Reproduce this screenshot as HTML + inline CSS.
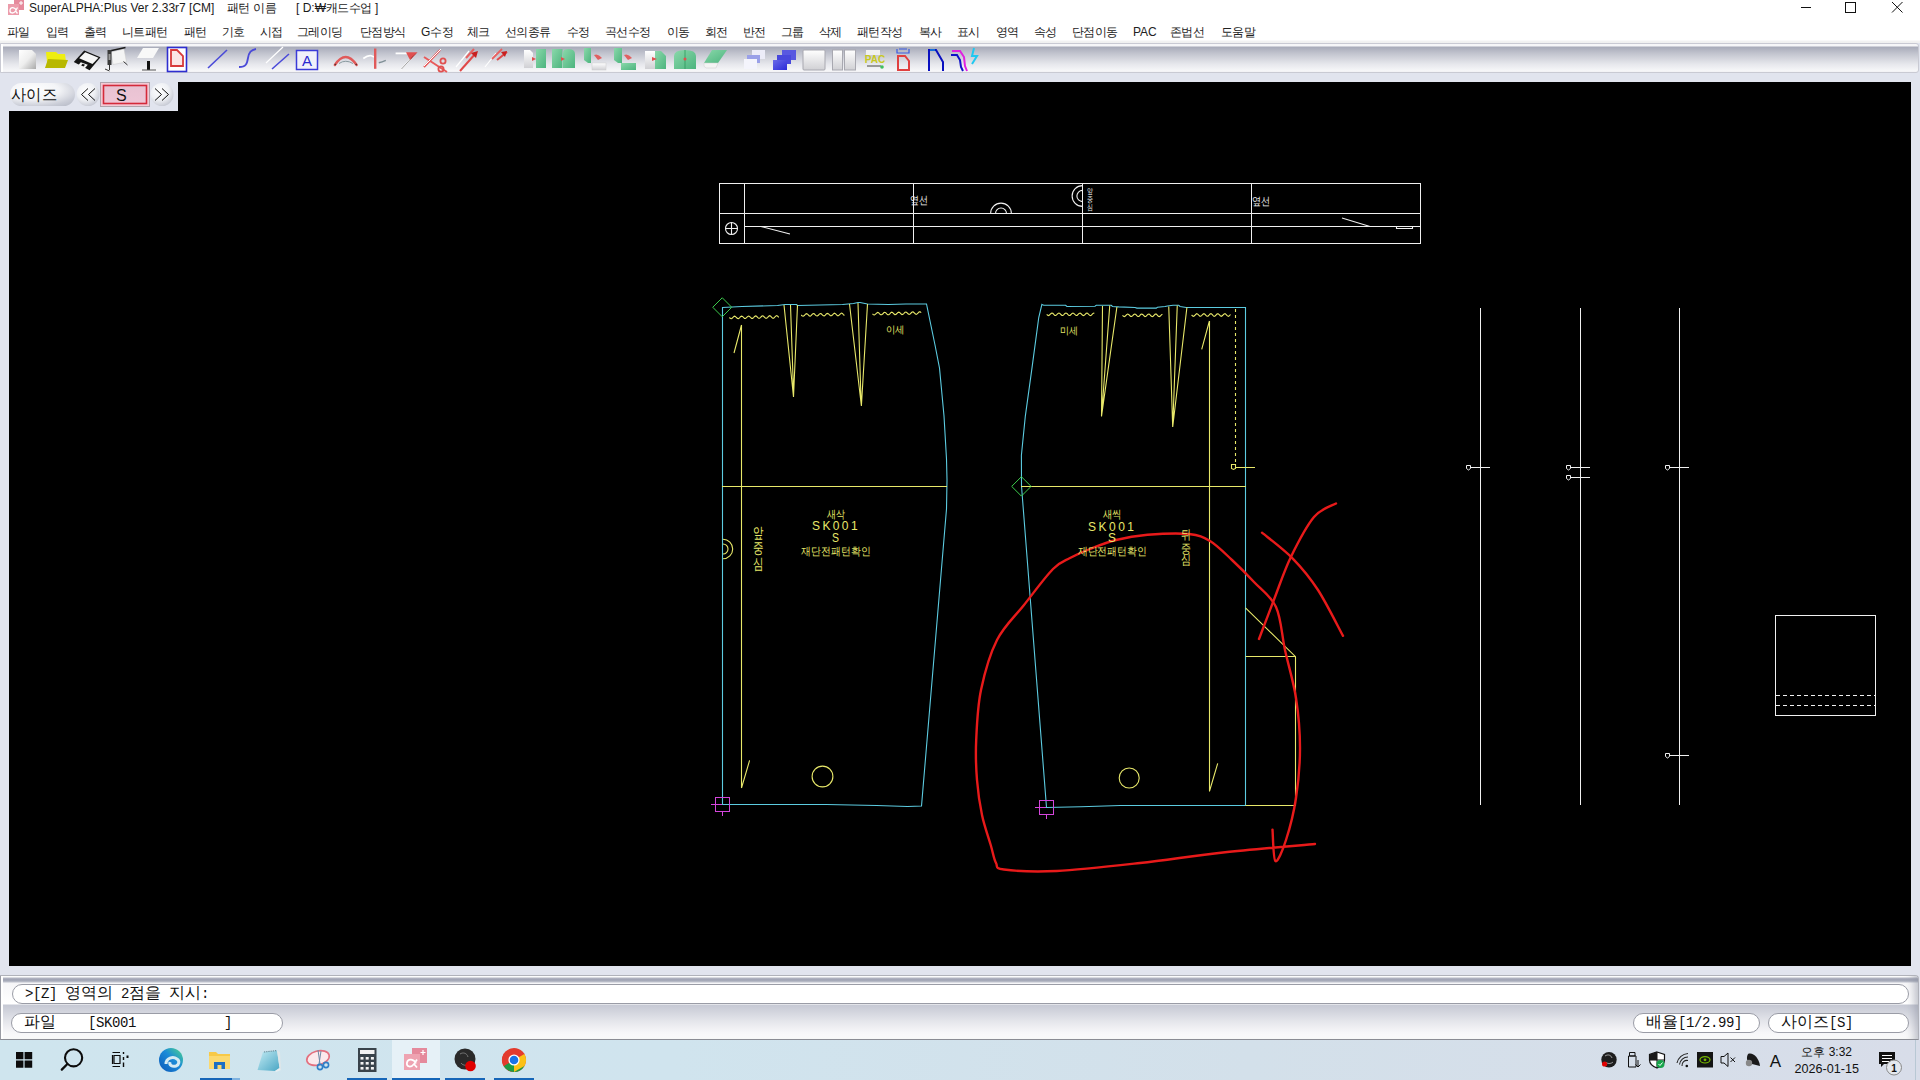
<!DOCTYPE html>
<html><head><meta charset="utf-8">
<style>
*{margin:0;padding:0;box-sizing:border-box}
html,body{width:1920px;height:1080px;overflow:hidden;background:#e1e4ee;font-family:"Liberation Sans",sans-serif;position:relative}
.abs{position:absolute}
#title{left:0;top:0;width:1920px;height:22px;background:#fff}
#title .t{top:1px;font-size:12px;color:#1a1a1a;white-space:pre;line-height:15px}
#menu{left:0;top:22px;width:1920px;height:21px;background:linear-gradient(#fff 0,#fff 18px,#f3f3f3 19px,#f0f0f0 21px)}
#menu .kc,#title .kc{display:inline-block;width:11.4px;font-weight:normal;text-align:center}
#menu span{position:absolute;top:2px;font-size:12px;line-height:16px;color:#222;white-space:nowrap}
#tb{left:0;top:43px;width:1919px;height:30px;border:1px solid #c9cad3;border-radius:0 3px 3px 0;box-shadow:inset 2px 0 0 #fff;
 background:linear-gradient(#f6f6f8 0px,#f6f6f8 2px,#a8abb9 3px,#c4c6d0 10px,#e6e7ec 20px,#f7f7f9 27px,#e8e8ee 29px)}
#canvas{left:9px;top:82px;width:1902px;height:884px;background:#000}
#sizep{left:8px;top:82px;width:170px;height:29px;background:#e1e4ee}
#bp{left:0;top:975px;width:1919px;height:65px;border:1px solid #b0b2ba;border-bottom-color:#8a8c94;border-left-color:#9a9ca4;border-radius:0 4px 0 0;
 box-shadow:inset 2px 0 0 #fff,inset -10px 0 8px -6px rgba(140,145,160,0.55);
 background:linear-gradient(#ffffff 0px,#ffffff 1px,#b4b7c4 2px,#9da1b1 4px,#bfc2cd 6px,#f6f6f8 7px,#f6f6f8 8px,#ffffff 28px,#c6c9d4 29px,#d3d5de 36px,#e6e7ec 46px,#f6f6f8 56px,#fbfbfb 62px)}
.pill i{display:inline-block;font-style:normal;text-align:center;overflow:visible;font-size:14px;vertical-align:top}
.pill i.kk{font-size:15.5px}
.pill{position:absolute;background:#fff;border:1px solid #9a9ca6;border-radius:11px;font-family:"Liberation Mono",monospace;color:#111;white-space:pre}
#task{left:0;top:1040px;width:1920px;height:40px;background:linear-gradient(90deg,#cfe5ee 0%,#d0e4ee 35%,#d3e0ea 65%,#d8dde9 100%)}
</style></head><body>
<div id="title" class="abs">
 <svg class="abs" style="left:8px;top:0" width="17" height="16" viewBox="0 0 17 16"><rect x="6" y="0" width="10" height="10" fill="#e58a9c"/><rect x="0" y="4" width="11" height="11" fill="#ec9cab"/><path d="M8.5,10.5 C7,7 2.5,6.5 2,10 C1.5,13.5 5.5,14 7.5,11 L9.5,7.5 M7.5,11 L9.5,13.5" fill="none" stroke="#fff" stroke-width="1.3"/><path d="M13,1 v4 M11,3 h4" stroke="#fff" stroke-width="1"/></svg>
 <svg class="abs" style="left:1790px;top:0" width="130" height="18" viewBox="1790 0 130 18"><path d="M1801,7.5 H1811" stroke="#111" stroke-width="1"/><rect x="1845.5" y="2.5" width="10" height="10" fill="none" stroke="#111" stroke-width="1"/><path d="M1892,2 L1902.5,12.5 M1902.5,2 L1892,12.5" stroke="#111" stroke-width="1"/></svg>
 <div class="t abs" style="left:29px">SuperALPHA:Plus Ver 2.33r7 [CM]</div><div class="t abs" style="left:227px"><b class="kc">패</b><b class="kc">턴</b> <b class="kc">이</b><b class="kc">름</b></div><div class="t abs" style="left:296px">[ D:₩<b class="kc">캐</b><b class="kc">드</b><b class="kc">수</b><b class="kc">업</b> ]</div>
</div>
<div id="menu" class="abs">
 <span style="left:7px"><b class="kc">파</b><b class="kc">일</b></span><span style="left:46px"><b class="kc">입</b><b class="kc">력</b></span><span style="left:84px"><b class="kc">출</b><b class="kc">력</b></span>
 <span style="left:122px"><b class="kc">니</b><b class="kc">트</b><b class="kc">패</b><b class="kc">턴</b></span><span style="left:184px"><b class="kc">패</b><b class="kc">턴</b></span><span style="left:222px"><b class="kc">기</b><b class="kc">호</b></span>
 <span style="left:260px"><b class="kc">시</b><b class="kc">접</b></span><span style="left:297px"><b class="kc">그</b><b class="kc">레</b><b class="kc">이</b><b class="kc">딩</b></span><span style="left:360px"><b class="kc">단</b><b class="kc">점</b><b class="kc">방</b><b class="kc">식</b></span>
 <span style="left:421px">G<b class="kc">수</b><b class="kc">정</b></span><span style="left:467px"><b class="kc">체</b><b class="kc">크</b></span><span style="left:505px"><b class="kc">선</b><b class="kc">의</b><b class="kc">종</b><b class="kc">류</b></span>
 <span style="left:567px"><b class="kc">수</b><b class="kc">정</b></span><span style="left:605px"><b class="kc">곡</b><b class="kc">선</b><b class="kc">수</b><b class="kc">정</b></span><span style="left:667px"><b class="kc">이</b><b class="kc">동</b></span>
 <span style="left:705px"><b class="kc">회</b><b class="kc">전</b></span><span style="left:743px"><b class="kc">반</b><b class="kc">전</b></span><span style="left:781px"><b class="kc">그</b><b class="kc">룹</b></span>
 <span style="left:819px"><b class="kc">삭</b><b class="kc">제</b></span><span style="left:857px"><b class="kc">패</b><b class="kc">턴</b><b class="kc">작</b><b class="kc">성</b></span><span style="left:919px"><b class="kc">복</b><b class="kc">사</b></span>
 <span style="left:957px"><b class="kc">표</b><b class="kc">시</b></span><span style="left:996px"><b class="kc">영</b><b class="kc">역</b></span><span style="left:1034px"><b class="kc">속</b><b class="kc">성</b></span>
 <span style="left:1072px"><b class="kc">단</b><b class="kc">점</b><b class="kc">이</b><b class="kc">동</b></span><span style="left:1133px">PAC</span><span style="left:1170px"><b class="kc">존</b><b class="kc">법</b><b class="kc">선</b></span>
 <span style="left:1221px"><b class="kc">도</b><b class="kc">움</b><b class="kc">말</b></span>
</div>
<div id="tb" class="abs"></div>
<svg class="abs" style="left:0;top:40px" width="1000" height="36" viewBox="0 40 1000 36">
<defs>
<linearGradient id="pg" x1="0" y1="0" x2="1" y2="1"><stop offset="0" stop-color="#ffffff"/><stop offset="0.5" stop-color="#eeeeee"/><stop offset="1" stop-color="#a9a9a9"/></linearGradient>
<linearGradient id="gg" x1="0" y1="0" x2="1" y2="1"><stop offset="0" stop-color="#8ad8aa"/><stop offset="1" stop-color="#4cb47e"/></linearGradient>
<linearGradient id="wg" x1="0" y1="0" x2="0" y2="1"><stop offset="0" stop-color="#ffffff"/><stop offset="1" stop-color="#d0d0d4"/></linearGradient>
<linearGradient id="bg" x1="0" y1="0" x2="1" y2="1"><stop offset="0" stop-color="#6a6ae8"/><stop offset="1" stop-color="#2a2ad8"/></linearGradient>
<linearGradient id="rg" x1="0" y1="0" x2="1" y2="0"><stop offset="0" stop-color="#f08080"/><stop offset="1" stop-color="#d83030"/></linearGradient>
</defs>
<!-- 1 new page -->
<path d="M19,50 H32 L36,54 V69 H19 Z" fill="url(#pg)"/>
<!-- 2 folder -->
<path d="M46,52 H56 L58,54 H65 L66,62 H47 Z" fill="#eeee10"/>
<path d="M48,59 L68,60 L65,68 H45 Z" fill="#b8b800"/>
<!-- 3 floppy -->
<path d="M84.2,50.5 L100.5,57.2 L89.6,70.2 L73.8,62 Z" fill="#141414"/>
<path d="M85.2,52.2 L98.5,57.8 L92.5,63.9 L79.2,58.2 Z" fill="#f6f6f6"/>
<path d="M80.8,62.2 L87.8,64.8 L84.6,68.4 L77.8,65.8 Z" fill="#f0f0f0"/>
<path d="M82.5,63.8 L85,64.8 L83.6,66.5 L81.2,65.5 Z" fill="#141414"/>
<!-- 4 plotter -->
<path d="M111,52 L124,49 L126.5,62 L113,64.5 Z" fill="#f4f4f4" stroke="#c8c8c8" stroke-width="0.5"/>
<path d="M110.5,50.8 L125.5,47.5" stroke="#1a1a1a" stroke-width="1.4"/>
<path d="M107.5,50 H111.5 V65 H107.5 Z" fill="#3a3a3a"/>
<path d="M108.5,54 H110.5 V60 H108.5 Z" fill="#9a9a9a"/>
<path d="M109.5,65 V70 M105,69 L109.5,71 M123.5,61.5 L127.5,65" stroke="#333" stroke-width="1"/>
<!-- 5 digitizer -->
<path d="M143,48 H159 L153,58 H137 Z" fill="#f8f8f8"/>
<path d="M147,61 H150 V70 H147 Z" fill="#111"/>
<path d="M142,70 H156" stroke="#555" stroke-width="1"/>
<!-- 6 red doc blue border -->
<rect x="167.5" y="47.5" width="19" height="24" fill="#fff" stroke="#2e2ed0" stroke-width="1.6"/>
<path d="M171,50 H177 L183,56 V66 H171 Z" fill="#fbe6e6" stroke="#d83a3a" stroke-width="1.8"/>
<!-- 7 line -->
<path d="M208,68 L227,50" stroke="#4a4ad8" stroke-width="1.6"/>
<!-- 8 S curve -->
<path d="M239,67 C246,67 247,64 248,58 C249,52 251,50 256,49" fill="none" stroke="#4a4ad8" stroke-width="1.8"/>
<!-- 9 parallel -->
<path d="M266,63 L283,47" stroke="#ffffff" stroke-width="1.2"/>
<path d="M272,69 L289,54" stroke="#4a4ad8" stroke-width="1.6"/>
<!-- 10 A box -->
<rect x="296.5" y="50.5" width="21" height="19" fill="#f0f0fa" stroke="#3a3ad8" stroke-width="1.5"/>
<text x="307" y="66" font-family="Liberation Sans, sans-serif" font-size="15" fill="#2a2ad0" text-anchor="middle">A</text>
<!-- 11 red arc -->
<path d="M339,63.5 Q345.5,59 353,63.5" fill="none" stroke="#8a9aa0" stroke-width="1"/>
<path d="M334.8,65 Q345.5,49 356.7,65" fill="none" stroke="#e05a5a" stroke-width="2.3" stroke-linecap="round"/>
<path d="M334.8,65 l1,-1 M356.7,65 l-1,-1" stroke="#5a3030" stroke-width="1.6"/>
<!-- 12 -->
<path d="M363.3,58.5 Q368,55 371.3,55.7 L374,57" fill="none" stroke="#ffffff" stroke-width="1.6"/>
<path d="M378.8,62.8 Q382,62 385.8,60.4" fill="none" stroke="#7f8f96" stroke-width="1.5"/>
<path d="M375.2,48.5 V68.8" stroke="#e05a5a" stroke-width="2.4"/>
<!-- 13 -->
<path d="M395.6,53.4 H407" stroke="#ffffff" stroke-width="1.8"/>
<path d="M401.2,69.3 L414,55" stroke="#ffffff" stroke-width="1.3"/>
<path d="M401.5,69 L412,57.5" stroke="#444" stroke-width="0.5"/>
<path d="M406,52.2 L417.5,52.2 L410,60 Z" fill="#e05050"/>
<path d="M417.5,52.2 L410,60 L412,57" fill="#802020"/>
<!-- 14 scissors -->
<path d="M424,57 L447,72 M424,67 L440,50" stroke="#e85a5a" stroke-width="2"/>
<path d="M424,66 L441,49" stroke="#fff" stroke-width="1"/>
<circle cx="443" cy="61" r="2.6" fill="none" stroke="#e05050" stroke-width="1.8"/>
<circle cx="441" cy="69" r="2.6" fill="none" stroke="#e05050" stroke-width="1.8"/>
<!-- 15 -->
<path d="M456,67 L469,51" stroke="#fff" stroke-width="1.2"/>
<path d="M460,71 L476,53" stroke="#e04848" stroke-width="2"/>
<path d="M466,58 L474,49" stroke="#e86060" stroke-width="2"/>
<path d="M471,53 L478,51 L476,58 Z" fill="#c82020"/>
<!-- 16 -->
<path d="M485,67 L496,53" stroke="#fff" stroke-width="1.2"/>
<path d="M492,59 L502,49" stroke="#e86060" stroke-width="1.8"/>
<path d="M497,60 L507,52" stroke="#e04848" stroke-width="2"/>
<path d="M501,52 L507,51 L505,57 Z" fill="#c82020"/>
<!-- 17 -->
<path d="M524,50 H530 L533,53 V68 H524 Z" fill="url(#wg)"/>
<rect x="536" y="49" width="10" height="19" fill="url(#gg)"/>
<path d="M532,57 L536,59 L532,61 Z" fill="#e05050"/>
<!-- 18 -->
<rect x="552" y="49" width="10.5" height="19" fill="url(#gg)"/>
<path d="M563,68 V53 Q563,49 568,49 Q575,49 575,54 V68 Z" fill="url(#gg)"/>
<path d="M561,57 L565,59 L561,61 Z" fill="#e05050"/>
<!-- 19 -->
<path d="M584,48 H591 V63 H588 L584,60 Z" fill="url(#gg)"/>
<rect x="592" y="63" width="14" height="7" fill="url(#wg)" stroke="#ccc" stroke-width="0.5"/>
<path d="M594,55 Q598,53 602,58 L598,60 Z" fill="#e06060"/>
<!-- 20 -->
<path d="M614,48 H622 V63 H618 L614,60 Z" fill="url(#gg)"/>
<rect x="621" y="63" width="15" height="7" fill="url(#gg)"/>
<path d="M624,55 Q628,53 632,58 L628,60 Z" fill="#e06060"/>
<!-- 21 -->
<path d="M645,51 L650,51 L655,51 V69 H645 Z" fill="url(#wg)"/>
<path d="M655,51 H661 L666,56 V69 H655 Z" fill="url(#gg)"/>
<path d="M652,57 L657,59 L652,61 Z" fill="#e05050"/>
<!-- 22 -->
<path d="M674,69 V56 Q674,50 685,50 Q696,50 696,56 V69 Z" fill="url(#gg)"/>
<path d="M685,50 V69" stroke="#2d9a5e" stroke-width="0.8"/>
<circle cx="685" cy="59" r="1.5" fill="#e05050"/>
<!-- 23 eraser -->
<path d="M712,50 H727 L718,63 H704 Z" fill="url(#gg)"/>
<path d="M704,63 H718 L716,68 H706 Q703,67 704,63 Z" fill="#f4f4f4" stroke="#ccc" stroke-width="0.5"/>
<!-- 24 -->
<rect x="752" y="50" width="13" height="9" fill="#ececf8"/>
<rect x="747" y="55" width="13" height="8" fill="#9aa0e8"/>
<rect x="744" y="59" width="13" height="10" fill="#f4f4fc"/>
<!-- 25 -->
<rect x="782" y="50" width="14" height="10" fill="#5858e0"/>
<rect x="777" y="55" width="14" height="9" fill="#4848dc"/>
<rect x="773" y="60" width="14" height="10" fill="url(#bg)"/>
<!-- 26 -->
<rect x="803" y="50" width="22" height="20" rx="1" fill="url(#wg)" stroke="#a8a8b0" stroke-width="1"/>
<!-- 27 -->
<rect x="832.5" y="50" width="10" height="20" fill="url(#wg)" stroke="#a8a8b0" stroke-width="1"/>
<rect x="844.5" y="50" width="11" height="20" fill="url(#wg)" stroke="#a8a8b0" stroke-width="1"/>
<!-- 28 PAC -->
<rect x="866" y="50" width="14" height="5" fill="#f0f0f0"/>
<text x="875" y="63" font-family="Liberation Sans, sans-serif" font-weight="bold" font-size="10" fill="#c8c820" text-anchor="middle">PAC</text>
<path d="M867,66 H881" stroke="#999" stroke-width="2"/>
<circle cx="882" cy="67" r="1.8" fill="#40c060"/>
<!-- 29 -->
<path d="M897,49 V53 H909 V49 M899,49 H907" fill="none" stroke="#3a5ae0" stroke-width="1.2"/>
<path d="M898,56 H905 L909,61 V70 H898 Z" fill="none" stroke="#e04040" stroke-width="2"/>
<!-- 30 -->
<path d="M929,71 V50 H936 L943,62 V71" fill="none" stroke="#0a10c0" stroke-width="2"/>
<path d="M930,50 H935" stroke="#20c8f0" stroke-width="1"/>
<!-- 31 -->
<path d="M952,51 H960 L964,57 L965,66 L967,71" fill="none" stroke="#e020e0" stroke-width="2"/>
<path d="M951,55 H957 L960,60 L961,67 L963,71" fill="none" stroke="#1010c8" stroke-width="2"/>
<path d="M974,48 L972,56 L977,56 L972,64" fill="none" stroke="#20c8f0" stroke-width="2"/>
</svg>

<div id="canvas" class="abs"></div>
<svg class="abs" style="left:0;top:0" width="1920" height="1080" viewBox="0 0 1920 1080">
<g fill="none" stroke="#f0f0f0" stroke-width="1" shape-rendering="crispEdges">
<rect x="719.5" y="183.5" width="701" height="60"/>
<path d="M744.5,183 V243 M913.5,183 V243 M1082.5,183 V243 M1251.5,183 V243 M719,213.5 H1420 M744,226.5 H1420"/>
</g>
<g fill="none" stroke="#f0f0f0" stroke-width="1.1">
<circle cx="731.5" cy="228.5" r="6"/><path d="M725.5,228.5 H737.5 M731.5,222.5 V234.5"/>
<path d="M761,226.5 L790,234 M1342,218 L1370,226.5 M1396.5,227 V228.5 H1412.5 V227"/>
<path d="M990.6,213.5 A10.4,10.4 0 0 1 1011.4,213.5 M995.5,213.5 A5.5,5.5 0 0 1 1006.5,213.5"/>
<path d="M1082.5,185.6 A10.4,10.4 0 0 0 1082.5,206.4 M1082.5,190.4 A5.6,5.6 0 0 0 1082.5,201.6"/>
</g>
<g fill="none" stroke="#5ccbe0" stroke-width="1.1">
<path d="M722.5,307.5 L742,306.5 L777.5,305.5 L785,304.5 L796.5,304.5 L797.5,305.5 L842.5,304.5 L853.5,303.5 L858,302.5 L860,302.5 L867.5,304 L888.5,304.5 L906,304 L926.5,304 L935,345 L939.5,368 L944,416 L946.5,459 L947,480 L946.5,509 L921.5,806 L907.5,806.5 L876.5,805.5 L826.5,804.5 L722.5,804.5 Z"/>
</g>
<g fill="none" stroke="#e8e86a" stroke-width="1.1">
<path d="M741.5,325 V788 M722,486.5 H947 M741.5,325 L734,353 M741.5,788 L749.6,760.4"/>
<path d="M784,305 L793.5,397 L797.5,305 M790.5,305 L793.5,392 M849.5,304 L861.4,406 L867.5,304 M858,303 L861,400"/>
<circle cx="822.5" cy="776.5" r="10.4"/>
<path d="M723,539.3 A9.7,9.7 0 0 1 723,558.7 M723,544 A5,5 0 0 1 723,554"/>
<path d="M729.4,317.5 L730.4,318.5 L731.4,318.7 L732.4,318.0 L733.4,316.9 L734.4,316.2 L735.4,316.4 L736.4,317.5 L737.5,318.5 L738.5,318.6 L739.5,317.9 L740.5,316.7 L741.5,316.1 L742.5,316.4 L743.5,317.4 L744.5,318.4 L745.5,318.5 L746.5,317.7 L747.5,316.6 L748.5,316.0 L749.5,316.4 L750.5,317.4 L751.6,318.4 L752.6,318.4 L753.6,317.6 L754.6,316.5 L755.6,315.9 L756.6,316.3 L757.6,317.4 L758.6,318.3 L759.6,318.3 L760.6,317.4 L761.6,316.3 L762.6,315.8 L763.6,316.3 L764.6,317.4 L765.7,318.2 L766.7,318.2 L767.7,317.3 L768.7,316.2 L769.7,315.7 L770.7,316.2 L771.7,317.3 L772.7,318.2 L773.7,318.1 L774.7,317.2 L775.7,316.1 L776.7,315.6 L777.7,316.2 L778.8,317.3"/>
<path d="M801.2,315.0 L802.3,316.0 L803.3,316.2 L804.3,315.5 L805.3,314.4 L806.3,313.7 L807.3,313.9 L808.3,314.9 L809.3,315.9 L810.3,316.1 L811.3,315.4 L812.3,314.2 L813.3,313.6 L814.3,313.8 L815.3,314.9 L816.3,315.8 L817.3,316.0 L818.3,315.3 L819.3,314.1 L820.3,313.5 L821.3,313.8 L822.3,314.8 L823.3,315.8 L824.3,315.9 L825.3,315.1 L826.3,314.0 L827.3,313.4 L828.3,313.7 L829.3,314.7 L830.4,315.7 L831.4,315.8 L832.4,315.0 L833.4,313.9 L834.4,313.2 L835.4,313.6 L836.4,314.7 L837.4,315.6 L838.4,315.7 L839.4,314.9 L840.4,313.8 L841.4,313.1 L842.4,313.5 L843.4,314.6 L844.4,315.5"/>
<path d="M872.5,313.8 L873.5,314.8 L874.5,315.0 L875.5,314.2 L876.6,313.1 L877.6,312.4 L878.6,312.7 L879.6,313.8 L880.6,314.7 L881.6,314.8 L882.7,314.0 L883.7,312.8 L884.7,312.3 L885.7,312.7 L886.7,313.8 L887.7,314.7 L888.8,314.7 L889.8,313.8 L890.8,312.6 L891.8,312.2 L892.8,312.7 L893.8,313.8 L894.8,314.6 L895.9,314.5 L896.9,313.5 L897.9,312.4 L898.9,312.1 L899.9,312.7 L900.9,313.8 L902.0,314.6 L903.0,314.3 L904.0,313.3 L905.0,312.2 L906.0,312.0 L907.0,312.7 L908.0,313.8 L909.1,314.5 L910.1,314.1 L911.1,313.0 L912.1,312.0 L913.1,311.9 L914.1,312.7 L915.2,313.8 L916.2,314.4 L917.2,313.9 L918.2,312.8 L919.2,311.9 L920.2,311.8 L921.2,312.7"/>
</g>
<path d="M722.25,297.75 L731.75,307.25 L722.25,316.75 L712.75,307.25 Z" fill="none" stroke="#3ccc4c" stroke-width="1"/>
<g fill="none" stroke="#d445dc" stroke-width="1" shape-rendering="crispEdges"><rect x="715.5" y="797.5" width="14" height="14"/><path d="M711,804.5 H722 M722.5,811 V816"/></g>
<g fill="none" stroke="#5ccbe0" stroke-width="1.1">
<path d="M1041.9,304.4 L1043.75,305.25 L1065.6,305.25 L1066.9,306.5 L1095,306.25 L1096.25,305.25 L1111.25,305.25 L1112.5,306.5 L1118.75,306.9 L1135,307.5 L1136.9,308.1 L1156.25,308.1 L1157.5,307.25 L1165,306.5 L1167.5,306 L1173,305.25 L1178.75,305.25 L1180,306.5 L1186.25,307.5 L1245.5,307.5 L1245.5,805.5 L1120.4,805.5 L1081,806.7 L1046.5,807.5 L1021.5,486 L1021.4,455.3 L1025.3,416.4 L1032,367.8 L1038.75,317.5 Z"/>
</g>
<g fill="none" stroke="#e8e86a" stroke-width="1.1">
<path d="M1209.5,321 V791 M1021,486.5 H1246 M1209.4,321 L1201.7,349.3 M1209.4,791.5 L1217.7,763.3"/>
<path d="M1102.5,306 L1101.5,416.4 L1116.9,307 M1109.75,305.5 L1102,410 M1168.75,306.5 L1172.7,427 L1186.9,307.5 M1177.25,305.5 L1173,420"/>
<path d="M1245.5,607.8 L1295.5,656.7 V805.5 H1245.5 M1245.5,656.5 H1295.5"/>
<circle cx="1129.2" cy="778" r="10"/>
<path d="M1235.5,309 V465" stroke-dasharray="3,3"/>
<path d="M1236,467.5 H1255 M1231.5,464.5 h4 v4 l-2,1 l-2,-1 z"/>
<path d="M1046.7,314.3 L1047.7,315.3 L1048.7,315.6 L1049.7,314.8 L1050.8,313.7 L1051.8,313.0 L1052.8,313.3 L1053.8,314.4 L1054.8,315.4 L1055.8,315.5 L1056.8,314.7 L1057.8,313.6 L1058.9,313.0 L1059.9,313.4 L1060.9,314.5 L1061.9,315.4 L1062.9,315.5 L1063.9,314.6 L1064.9,313.5 L1065.9,313.0 L1067.0,313.5 L1068.0,314.6 L1069.0,315.5 L1070.0,315.4 L1071.0,314.5 L1072.0,313.4 L1073.0,313.0 L1074.0,313.6 L1075.1,314.7 L1076.1,315.5 L1077.1,315.4 L1078.1,314.4 L1079.1,313.4 L1080.1,313.0 L1081.1,313.7 L1082.1,314.8 L1083.2,315.6 L1084.2,315.3 L1085.2,314.3 L1086.2,313.3 L1087.2,313.0 L1088.2,313.8 L1089.2,314.9 L1090.2,315.6 L1091.3,315.3 L1092.3,314.2 L1093.3,313.2 L1094.3,313.1"/>
<path d="M1122.5,315.3 L1123.5,316.3 L1124.5,316.6 L1125.6,315.8 L1126.6,314.6 L1127.6,314.0 L1128.6,314.4 L1129.7,315.5 L1130.7,316.4 L1131.7,316.5 L1132.7,315.6 L1133.8,314.5 L1134.8,314.0 L1135.8,314.5 L1136.8,315.7 L1137.8,316.5 L1138.9,316.4 L1139.9,315.4 L1140.9,314.3 L1141.9,314.0 L1143.0,314.7 L1144.0,315.8 L1145.0,316.6 L1146.0,316.3 L1147.1,315.2 L1148.1,314.2 L1149.1,314.1 L1150.1,314.9 L1151.1,316.0 L1152.2,316.6 L1153.2,316.2 L1154.2,315.1 L1155.2,314.1 L1156.3,314.1 L1157.3,315.1 L1158.3,316.2 L1159.3,316.6 L1160.4,316.0 L1161.4,314.9 L1162.4,314.1"/>
<path d="M1191.6,315.0 L1192.6,316.0 L1193.6,316.3 L1194.7,315.5 L1195.7,314.3 L1196.7,313.7 L1197.7,314.1 L1198.8,315.2 L1199.8,316.1 L1200.8,316.2 L1201.8,315.3 L1202.9,314.2 L1203.9,313.7 L1204.9,314.2 L1205.9,315.4 L1207.0,316.2 L1208.0,316.1 L1209.0,315.1 L1210.0,314.0 L1211.0,313.7 L1212.1,314.4 L1213.1,315.6 L1214.1,316.3 L1215.1,316.0 L1216.2,314.9 L1217.2,313.9 L1218.2,313.8 L1219.2,314.6 L1220.3,315.7 L1221.3,316.3 L1222.3,315.8 L1223.3,314.7 L1224.4,313.8 L1225.4,313.8 L1226.4,314.8 L1227.4,315.9 L1228.5,316.3 L1229.5,315.7 L1230.5,314.5"/>
</g>
<path d="M1021.4,476.7 L1031.1,486.4 L1021.4,496.1 L1011.7,486.4 Z" fill="none" stroke="#3ccc4c" stroke-width="1"/>
<g fill="none" stroke="#d445dc" stroke-width="1" shape-rendering="crispEdges"><rect x="1039.5" y="800.5" width="14" height="14"/><path d="M1035,807.5 H1046 M1046.5,814 V819"/></g>
<g fill="none" stroke="#f0f0f0" stroke-width="1" shape-rendering="crispEdges">
<path d="M1480.5,308 V805 M1580.5,308 V805 M1679.5,308 V805"/>
<path d="M1471,467.5 H1490 M1571,467.5 H1590 M1571,477.5 H1590 M1670,467.5 H1689 M1670,755.5 H1689"/>
<rect x="1775.5" y="615.5" width="100" height="100"/>
<path d="M1776,695.5 H1875 M1776,705.5 H1875" stroke-dasharray="4,3"/>
</g>
<g fill="none" stroke="#f0f0f0" stroke-width="1">
<path d="M1466.5,465.5 h4 v3 l-2,1.5 l-2,-1.5 z"/>
<path d="M1566.5,465.5 h4 v3 l-2,1.5 l-2,-1.5 z"/>
<path d="M1566.5,475.5 h4 v3 l-2,1.5 l-2,-1.5 z"/>
<path d="M1665.5,465.5 h4 v3 l-2,1.5 l-2,-1.5 z"/>
<path d="M1665.5,753.5 h4 v3 l-2,1.5 l-2,-1.5 z"/>
</g>
<g fill="none" stroke="#e81a1a" stroke-width="2.4" stroke-linecap="round" stroke-linejoin="round">
<path d="M1272.5,829.6 C1273.0,834.8 1273.2,859.3 1275.4,861.0 C1277.7,862.7 1282.6,850.5 1286.0,840.0 C1289.4,829.5 1293.7,813.3 1296.0,798.0 C1298.3,782.7 1300.0,764.7 1300.0,748.0 C1300.0,731.3 1298.5,714.3 1296.0,698.0 C1293.5,681.7 1288.3,665.2 1285.0,650.0 C1281.7,634.8 1281.2,618.3 1276.0,607.0 C1270.8,595.7 1261.3,589.8 1254.0,582.0 C1246.7,574.2 1239.3,566.8 1232.0,560.0 C1224.7,553.2 1217.2,545.3 1210.0,541.0 C1202.8,536.7 1199.4,535.0 1189.0,534.0 C1178.6,533.0 1159.7,533.8 1147.5,534.8 C1135.3,535.8 1125.6,537.6 1116.0,540.0 C1106.4,542.4 1097.7,546.0 1090.0,549.0 C1082.3,552.0 1076.2,554.7 1070.0,558.0 C1063.8,561.3 1060.7,561.2 1053.0,569.0 C1045.3,576.8 1033.3,593.2 1024.0,605.0 C1014.7,616.8 1004.2,625.8 997.0,640.0 C989.8,654.2 984.5,673.3 981.0,690.0 C977.5,706.7 976.9,725.0 976.2,740.0 C975.5,755.0 976.0,767.5 977.0,780.0 C978.0,792.5 979.7,804.0 982.0,815.0 C984.3,826.0 988.7,838.0 991.0,846.0 C993.3,854.0 993.8,859.1 996.0,863.0 C998.2,866.9 993.9,868.2 1004.0,869.5 C1014.1,870.8 1034.0,872.1 1056.7,871.0 C1079.4,869.9 1112.3,866.1 1140.0,863.0 C1167.7,859.9 1193.8,855.7 1223.0,852.5 C1252.2,849.3 1299.7,845.4 1315.0,844.0"/>
<path d="M1336.0,503.5 C1332.3,505.8 1321.5,508.1 1314.0,517.0 C1306.5,525.9 1297.6,543.2 1291.0,556.7 C1284.4,570.2 1279.9,584.3 1274.6,598.0 C1269.3,611.7 1261.6,632.2 1259.0,639.0"/>
<path d="M1262.0,532.7 C1267.2,537.0 1283.7,549.2 1293.0,558.8 C1302.3,568.3 1309.7,577.2 1318.0,590.0 C1326.3,602.8 1338.8,628.2 1343.0,635.8"/>
</g>
<g font-family="Liberation Sans, sans-serif">
<text x="910" y="204" font-size="11" textLength="18.0" lengthAdjust="spacingAndGlyphs" fill="#f0f0f0">옆선</text>
<text x="1252" y="204.5" font-size="11" textLength="18.3" lengthAdjust="spacingAndGlyphs" fill="#f0f0f0">옆선</text>
<text x="827" y="517.5" font-size="10.5" textLength="18.0" lengthAdjust="spacingAndGlyphs" fill="#e8e86a">새삭</text>
<text x="812" y="530" font-size="12" textLength="45.6" lengthAdjust="spacing" fill="#e8e86a">SK001</text>
<text x="832" y="541.6" font-size="12.5" textLength="7.0" lengthAdjust="spacingAndGlyphs" fill="#e8e86a">S</text>
<text x="801.4" y="555" font-size="10.5" textLength="69.0" lengthAdjust="spacingAndGlyphs" fill="#e8e86a">재단전패턴확인</text>
<text x="1102.7" y="518" font-size="10.5" textLength="18.8" lengthAdjust="spacingAndGlyphs" fill="#e8e86a">새씩</text>
<text x="1088" y="530.6" font-size="12" textLength="46.0" lengthAdjust="spacing" fill="#e8e86a">SK001</text>
<text x="1108" y="542" font-size="12.5" textLength="8.0" lengthAdjust="spacingAndGlyphs" fill="#e8e86a">S</text>
<text x="1077.7" y="554.6" font-size="10.5" textLength="68.8" lengthAdjust="spacingAndGlyphs" fill="#e8e86a">재단전패턴확인</text>
<text x="885.6" y="333" font-size="10" textLength="18.8" lengthAdjust="spacingAndGlyphs" fill="#e8e86a">이세</text>
<text x="1059.75" y="334" font-size="10" textLength="18.2" lengthAdjust="spacingAndGlyphs" fill="#e8e86a">미세</text>
<text x="753.1" y="538.0" font-size="14.6" textLength="10.5" lengthAdjust="spacingAndGlyphs" fill="#e8e86a">앞</text><text x="753.1" y="553.0" font-size="14.6" textLength="10.5" lengthAdjust="spacingAndGlyphs" fill="#e8e86a">중</text><text x="753.1" y="569.0" font-size="14.6" textLength="10.5" lengthAdjust="spacingAndGlyphs" fill="#e8e86a">심</text>
<text x="1181.0" y="538.5" font-size="13.4" textLength="10" lengthAdjust="spacingAndGlyphs" fill="#e8e86a">뒤</text><text x="1181.0" y="553.0" font-size="13.4" textLength="10" lengthAdjust="spacingAndGlyphs" fill="#e8e86a">중</text><text x="1181.0" y="564.0" font-size="13.4" textLength="10" lengthAdjust="spacingAndGlyphs" fill="#e8e86a">심</text>
<text x="1087.0" y="194.0" font-size="8.4" textLength="6" lengthAdjust="spacingAndGlyphs" fill="#f0f0f0">앞</text><text x="1087.0" y="202.0" font-size="8.4" textLength="6" lengthAdjust="spacingAndGlyphs" fill="#f0f0f0">중</text><text x="1087.0" y="210.0" font-size="8.4" textLength="6" lengthAdjust="spacingAndGlyphs" fill="#f0f0f0">심</text>
</g>
</svg>
<div id="sizep" class="abs">
<svg class="abs" style="left:0;top:0" width="170" height="29" viewBox="8 82 170 29">
<defs>
<radialGradient id="pb" cx="0.35" cy="0.3" r="0.9"><stop offset="0" stop-color="#ffffff"/><stop offset="0.45" stop-color="#f3f4f7"/><stop offset="0.8" stop-color="#c9ccd6"/><stop offset="1" stop-color="#b8bcc8"/></radialGradient>
<radialGradient id="cb" cx="0.4" cy="0.35" r="0.8"><stop offset="0" stop-color="#ffffff"/><stop offset="0.5" stop-color="#eef0f4"/><stop offset="0.85" stop-color="#c6c9d3"/><stop offset="1" stop-color="#e6e8ee"/></radialGradient>
<linearGradient id="sb" x1="0" y1="0" x2="0" y2="1"><stop offset="0" stop-color="#e8c2d2"/><stop offset="1" stop-color="#eec6d6"/></linearGradient>
</defs>
<rect x="10" y="83" width="65" height="23" rx="11.5" fill="url(#pb)"/>
<text x="11" y="99.5" font-family="Liberation Sans, sans-serif" font-size="16" fill="#111" textLength="46" lengthAdjust="spacingAndGlyphs">사이즈</text>
<circle cx="88" cy="94.5" r="11.5" fill="url(#cb)"/>
<path d="M88,88.5 L81.5,94.5 L88,100.5 M95,88.5 L88.5,94.5 L95,100.5" fill="none" stroke="#111" stroke-width="1"/>
<rect x="100.5" y="82.5" width="49" height="24" fill="#f4c8d4" stroke="#b0a4ac" stroke-width="1"/>
<rect x="103.5" y="85.5" width="43" height="18" fill="url(#sb)" stroke="#d42a3a" stroke-width="1.6"/>
<text x="121.3" y="100.6" font-family="Liberation Sans, sans-serif" font-size="16" fill="#111" text-anchor="middle">S</text>
<circle cx="162" cy="94.5" r="11.5" fill="url(#cb)"/>
<path d="M155,88.5 L161.5,94.5 L155,100.5 M162,88.5 L168.5,94.5 L162,100.5" fill="none" stroke="#111" stroke-width="1"/>
</svg>
</div>
<div id="bp" class="abs">
 <div class="pill" style="left:11px;top:8px;width:1897px;height:20px;font-size:15px;line-height:18px;padding-left:12px"><i style="width:8px">&gt;</i><i style="width:8px">[</i><i style="width:8px">Z</i><i style="width:8px">]</i><i style="width:8px"></i><i class="kk" style="width:16px">영</i><i class="kk" style="width:16px">역</i><i class="kk" style="width:16px">의</i><i style="width:8px"></i><i style="width:8px">2</i><i class="kk" style="width:16px">점</i><i class="kk" style="width:16px">을</i><i style="width:8px"></i><i class="kk" style="width:16px">지</i><i class="kk" style="width:16px">시</i><i style="width:8px">:</i></div>
 <div class="pill" style="left:10px;top:37px;width:272px;height:20px;font-size:15px;line-height:18px;padding-left:12px"><i class="kk" style="width:16px">파</i><i class="kk" style="width:16px">일</i><i style="width:8px"></i><i style="width:8px"></i><i style="width:8px"></i><i style="width:8px"></i><i style="width:8px">[</i><i style="width:8px">S</i><i style="width:8px">K</i><i style="width:8px">0</i><i style="width:8px">0</i><i style="width:8px">1</i><i style="width:8px"></i><i style="width:8px"></i><i style="width:8px"></i><i style="width:8px"></i><i style="width:8px"></i><i style="width:8px"></i><i style="width:8px"></i><i style="width:8px"></i><i style="width:8px"></i><i style="width:8px"></i><i style="width:8px"></i><i style="width:8px">]</i></div>
 <div class="pill" style="left:1632px;top:37px;width:127px;height:20px;font-size:15px;line-height:18px;padding-left:12px"><i class="kk" style="width:16px">배</i><i class="kk" style="width:16px">율</i><i style="width:8px">[</i><i style="width:8px">1</i><i style="width:8px">/</i><i style="width:8px">2</i><i style="width:8px">.</i><i style="width:8px">9</i><i style="width:8px">9</i><i style="width:8px">]</i></div>
 <div class="pill" style="left:1767px;top:37px;width:141px;height:20px;font-size:15px;line-height:18px;padding-left:12px"><i class="kk" style="width:16px">사</i><i class="kk" style="width:16px">이</i><i class="kk" style="width:16px">즈</i><i style="width:8px">[</i><i style="width:8px">S</i><i style="width:8px">]</i></div>
</div>
<div id="task" class="abs"></div>
<svg class="abs" style="left:0;top:1040px" width="1920" height="40" viewBox="0 1040 1920 40">
<rect x="392" y="1040" width="48" height="40" fill="#e6f1f7"/>
<path d="M1915.5,1040 V1080" stroke="#b8c8d4" stroke-width="1"/>
<!-- windows -->
<path d="M16,1052 H23.4 V1059.3 H16 Z M24.6,1052 H32.2 V1059.3 H24.6 Z M16,1060.5 H23.4 V1067.8 H16 Z M24.6,1060.5 H32.2 V1067.8 H24.6 Z" fill="#0c0c0c"/>
<!-- search -->
<circle cx="73.6" cy="1057.8" r="8.6" fill="none" stroke="#0c0c0c" stroke-width="2.1"/>
<path d="M67.4,1064 L61.8,1069.6" stroke="#0c0c0c" stroke-width="2.3" stroke-linecap="round"/>
<!-- task view -->
<path d="M112.5,1052.5 H120 M112.5,1066.5 H120 M114,1055.5 H120 V1063.5 H114 Z M112.5,1055 V1064" fill="none" stroke="#0c0c0c" stroke-width="1.2"/>
<path d="M123.5,1052 V1054 M123.5,1057 V1060 M123.5,1062.5 V1067" stroke="#0c0c0c" stroke-width="1.4"/>
<rect x="126.5" y="1055.5" width="2" height="2.5" fill="#0c0c0c"/>
<!-- edge -->
<defs>
<linearGradient id="edg" x1="0" y1="1" x2="1" y2="0"><stop offset="0" stop-color="#0b57b8"/><stop offset="0.55" stop-color="#1a8ad8"/><stop offset="1" stop-color="#4fd88a"/></linearGradient>
<linearGradient id="chr1" x1="0" y1="0" x2="1" y2="1"><stop offset="0" stop-color="#e23b2e"/><stop offset="1" stop-color="#e23b2e"/></linearGradient>
</defs>
<circle cx="171" cy="1060" r="12" fill="url(#edg)"/>
<path d="M166,1064 C166,1058 173,1056 177,1059 C180,1061 179,1065 176,1066 C172,1067 169,1065 170,1062" fill="none" stroke="#d4eaf3" stroke-width="3"/>
<!-- explorer -->
<path d="M209,1052 H216 L218,1054 H230 V1069 H209 Z" fill="#f7c948"/>
<path d="M209,1056 H230 V1069 H209 Z" fill="#fbd970"/>
<path d="M214,1069 V1062 H225 V1069 H221.5 V1065 H217.5 V1069 Z" fill="#1b6fc4"/>
<rect x="200" y="1078" width="32" height="2" fill="#1666b8"/><rect x="232" y="1078" width="8" height="2" fill="#7fb3e0"/>
<!-- notepad -->
<defs><linearGradient id="npg" x1="0" y1="0" x2="1" y2="1"><stop offset="0" stop-color="#c4ecf4"/><stop offset="1" stop-color="#4aa6c4"/></linearGradient></defs>
<path d="M263,1052 L277,1050.5 L279.5,1068 L275,1071 L257.5,1070 Z" fill="url(#npg)"/>
<path d="M275,1071 L279.5,1068 L281,1070 L276,1072 Z" fill="#e8eef0"/>
<path d="M277,1050.5 L280,1052 L281,1070 L279.5,1068 Z" fill="#dfe6e8"/>
<path d="M264,1052 L276.5,1050.6" stroke="#6a8a98" stroke-width="1.2" stroke-dasharray="1.2,1"/>
<!-- snipping -->
<ellipse cx="318" cy="1058" rx="11.5" ry="7" fill="#fbe9ec" stroke="#e3707f" stroke-width="1.6" transform="rotate(-15 318 1058)"/>
<path d="M318,1050 L320,1064 M321,1051 L319,1064" stroke="#6c8aa8" stroke-width="1"/>
<circle cx="320" cy="1067" r="2.6" fill="none" stroke="#2f7fc8" stroke-width="1.6"/>
<circle cx="326" cy="1065" r="2.6" fill="none" stroke="#2f7fc8" stroke-width="1.6"/>
<!-- calculator -->
<rect x="358" y="1048" width="18.5" height="24" fill="#39434b"/>
<rect x="360" y="1050" width="14.5" height="4" fill="#f2f2f2"/>
<g fill="#f2f2f2"><rect x="360.5" y="1057" width="3" height="2.6"/><rect x="365.7" y="1057" width="3" height="2.6"/><rect x="370.9" y="1057" width="3" height="2.6"/><rect x="360.5" y="1062" width="3" height="2.6"/><rect x="365.7" y="1062" width="3" height="2.6"/><rect x="370.9" y="1062" width="3" height="2.6"/><rect x="360.5" y="1067" width="3" height="2.6"/><rect x="365.7" y="1067" width="3" height="2.6"/><rect x="370.9" y="1067" width="3" height="2.6"/></g>
<rect x="347" y="1078" width="40" height="2" fill="#1666b8"/>
<!-- alpha -->
<rect x="412" y="1048" width="15" height="15" fill="#e58a9c"/>
<rect x="404" y="1054" width="16" height="16" fill="#eea3b1"/>
<path d="M416,1063.5 C414,1059 408,1058 407,1062.5 C406,1067 411,1068 414,1064 L417,1059.5 M414,1064 L417,1067.5" fill="none" stroke="#fff" stroke-width="1.8"/>
<path d="M423,1050 v5 M420.5,1052.5 h5" stroke="#fff" stroke-width="1.2"/>
<rect x="392" y="1078" width="48" height="2" fill="#1666b8"/>
<!-- obs -->
<circle cx="465" cy="1059" r="10.5" fill="#2a2a2a"/>
<path d="M460,1054 C463,1052 467,1053 468,1057 M471,1063 C468,1066 463,1066 461,1063" fill="none" stroke="#777" stroke-width="1"/>
<circle cx="470.5" cy="1066" r="5.3" fill="#e00000"/>
<rect x="445" y="1078" width="40" height="2" fill="#1666b8"/>
<!-- chrome -->
<circle cx="514" cy="1060" r="12" fill="#e33b2e"/>
<path d="M514,1060 L503.6,1066 A12,12 0 0 0 514,1072 A12,12 0 0 0 524.4,1066 Z" fill="#1e9b45"/>
<path d="M514,1060 L524.4,1054 A12,12 0 0 1 524.4,1066 L514,1072 Z" fill="#fbc116"/>
<path d="M514,1060 L503.6,1066 A12,12 0 0 1 503.6,1054 Z" fill="#e33b2e"/>
<circle cx="514" cy="1060" r="5.6" fill="#fff"/><circle cx="514" cy="1060" r="4.3" fill="#1a73e8"/>
<rect x="494" y="1078" width="40" height="2" fill="#1666b8"/>
<!-- tray -->
<circle cx="1609" cy="1059.8" r="7.7" fill="#1e1e1e"/>
<path d="M1605,1056 C1608,1054 1611,1055 1612,1058 M1613,1062 C1611,1064 1607,1064 1606,1062" fill="none" stroke="#bbb" stroke-width="0.8"/>
<circle cx="1604.6" cy="1064" r="2.6" fill="#e00000"/>
<path d="M1629.5,1052.5 H1635 V1056 H1629.5 Z M1628.5,1056 H1636 V1067 H1628.5 Z" fill="none" stroke="#111" stroke-width="1"/>
<path d="M1638,1060 V1067 M1635.5,1064.5 L1638,1067 L1640.5,1064.5" fill="none" stroke="#111" stroke-width="1"/>
<path d="M1657,1052 L1664.5,1054.5 V1060 C1664.5,1064 1661,1066.5 1657,1068 C1653,1066.5 1649.5,1064 1649.5,1060 V1054.5 Z" fill="#fff" stroke="#111" stroke-width="1.2"/>
<path d="M1657,1052 V1068 M1649.5,1060 H1664.5" stroke="#111" stroke-width="1"/>
<path d="M1657,1052 L1649.5,1054.5 V1060 H1657 Z" fill="#1a1a1a"/>
<circle cx="1660.5" cy="1064" r="4" fill="#16a34a"/>
<path d="M1658.5,1064 L1660,1065.5 L1662.5,1062.5" fill="none" stroke="#fff" stroke-width="1"/>
<path d="M1677,1063 A12,12 0 0 1 1688,1053.5 M1679.5,1064.5 A8.5,8.5 0 0 1 1688,1057 M1682,1066 A5,5 0 0 1 1688,1060.5" fill="none" stroke="#222" stroke-width="1.1"/>
<circle cx="1686.8" cy="1066" r="1.3" fill="#111"/>
<rect x="1697" y="1052" width="16" height="15.5" fill="#141414"/>
<ellipse cx="1705" cy="1059.8" rx="5" ry="3.2" fill="none" stroke="#76b900" stroke-width="1.2"/>
<circle cx="1705" cy="1059.8" r="1.4" fill="#76b900"/>
<path d="M1721,1056.5 H1724 L1728,1053 V1066.5 L1724,1063 H1721 Z" fill="none" stroke="#111" stroke-width="1"/>
<path d="M1730.5,1057.5 L1735,1062 M1735,1057.5 L1730.5,1062" stroke="#111" stroke-width="1"/>
<path d="M1748,1054 C1753,1052 1759,1058 1760,1066 L1752,1064 C1749,1063 1745,1060 1748,1054 Z" fill="#1a1a1a"/>
<circle cx="1749" cy="1063" r="3.2" fill="#888"/>
<text x="1775.5" y="1066.6" font-family="Liberation Sans, sans-serif" font-size="17" fill="#111" text-anchor="middle">A</text>
<text x="1801.4" y="1055.5" font-family="Liberation Sans, sans-serif" font-size="12" fill="#111" textLength="50.6" lengthAdjust="spacingAndGlyphs">오후 3:32</text>
<text x="1794.5" y="1072.8" font-family="Liberation Sans, sans-serif" font-size="12" fill="#111" textLength="64.5" lengthAdjust="spacingAndGlyphs">2026-01-15</text>
<path d="M1879,1052 H1895 V1064 H1884 L1881,1067 V1064 H1879 Z" fill="#111"/>
<path d="M1882,1055.5 H1892 M1882,1058.5 H1892 M1882,1061.5 H1889" stroke="#fff" stroke-width="1"/>
<circle cx="1894" cy="1067.5" r="7.5" fill="#e4e8ee" stroke="#888" stroke-width="1"/>
<text x="1894" y="1071.5" font-family="Liberation Sans, sans-serif" font-size="10" font-weight="bold" fill="#111" text-anchor="middle">1</text>
</svg>

</body></html>
